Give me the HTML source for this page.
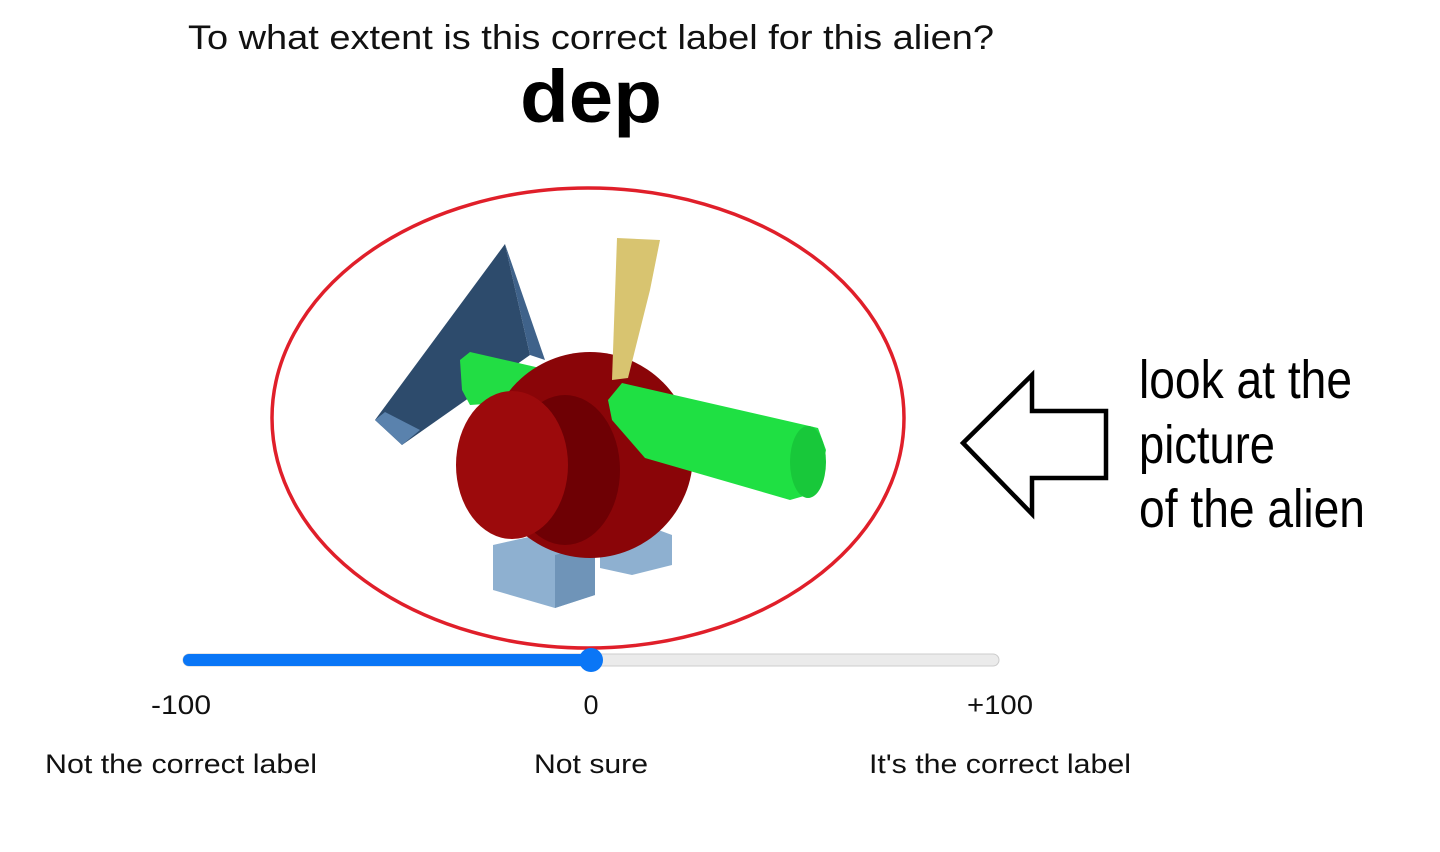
<!DOCTYPE html>
<html><head><meta charset="utf-8"><style>
html,body{margin:0;padding:0;background:#fff;width:1440px;height:852px;overflow:hidden}
svg{display:block}
</style></head><body>
<svg width="1440" height="852" viewBox="0 0 1440 852" xmlns="http://www.w3.org/2000/svg">
<text x="591" y="49" text-anchor="middle" font-family="Liberation Sans, sans-serif" font-size="34" fill="#111" textLength="806" lengthAdjust="spacingAndGlyphs">To what extent is this correct label for this alien?</text>
<text x="591" y="122" text-anchor="middle" font-family="Liberation Sans, sans-serif" font-weight="bold" font-size="74" fill="#000" textLength="142" lengthAdjust="spacingAndGlyphs">dep</text>

<!-- alien -->
<polygon points="505,244 375,420 402,445 530,355" fill="#2d4b6c"/>
<polygon points="505,244 530,355 545,360" fill="#3f628a"/>
<polygon points="375,420 402,445 420,430 385,412" fill="#5a82ad"/>
<polygon points="493,545 560,530 595,545 595,595 555,608 493,590" fill="#8eb0d0"/>
<polygon points="555,555 595,545 595,595 555,608" fill="#6f94b8"/>
<polygon points="600,535 645,525 672,535 672,565 632,575 600,568" fill="#8eb0d0"/>
<polygon points="460,360 470,352 540,368 545,400 470,405 462,390" fill="#22dd44"/>
<circle cx="590" cy="455" r="103" fill="#8a0508"/>
<ellipse cx="565" cy="470" rx="55" ry="75" fill="#6e0004"/>
<ellipse cx="512" cy="465" rx="56" ry="74" fill="#9c0a0c"/>
<polygon points="617,238 660,240 650,290 628,378 612,380" fill="#d8c470"/>
<polygon points="608,400 622,383 818,428 826,450 818,492 790,500 645,458 612,420" fill="#1fe043"/>
<ellipse cx="808" cy="462" rx="18" ry="36" fill="#18c83a"/>

<ellipse cx="588" cy="418" rx="316" ry="230" fill="none" stroke="#e01f2a" stroke-width="3.5"/>

<!-- slider -->
<rect x="183" y="654" width="816" height="12" rx="6" fill="#ebebeb" stroke="#ccc" stroke-width="1"/>
<rect x="183" y="654" width="408" height="12" rx="6" fill="#0a76f6"/>
<circle cx="591" cy="660" r="12" fill="#0a76f6"/>

<g font-family="Liberation Sans, sans-serif" font-size="27" fill="#111" text-anchor="middle">
<text x="181" y="714" textLength="60" lengthAdjust="spacingAndGlyphs">-100</text>
<text x="591" y="714">0</text>
<text x="1000" y="714" textLength="66" lengthAdjust="spacingAndGlyphs">+100</text>
<text x="181" y="773" textLength="272" lengthAdjust="spacingAndGlyphs">Not the correct label</text>
<text x="591" y="773" textLength="114" lengthAdjust="spacingAndGlyphs">Not sure</text>
<text x="1000" y="773" textLength="262" lengthAdjust="spacingAndGlyphs">It's the correct label</text>
</g>

<polygon points="963,443 1032,375 1032,411 1106,411 1106,478 1032,478 1032,514" fill="#fff" stroke="#000" stroke-width="4.5" stroke-linejoin="miter"/>
<g font-family="Liberation Sans Narrow, Liberation Sans, sans-serif" font-size="54" fill="#000">
<text x="1139" y="398" textLength="213" lengthAdjust="spacingAndGlyphs">look at the</text>
<text x="1139" y="463" textLength="136" lengthAdjust="spacingAndGlyphs">picture</text>
<text x="1139" y="527" textLength="226" lengthAdjust="spacingAndGlyphs">of the alien</text>
</g>
</svg>
</body></html>
